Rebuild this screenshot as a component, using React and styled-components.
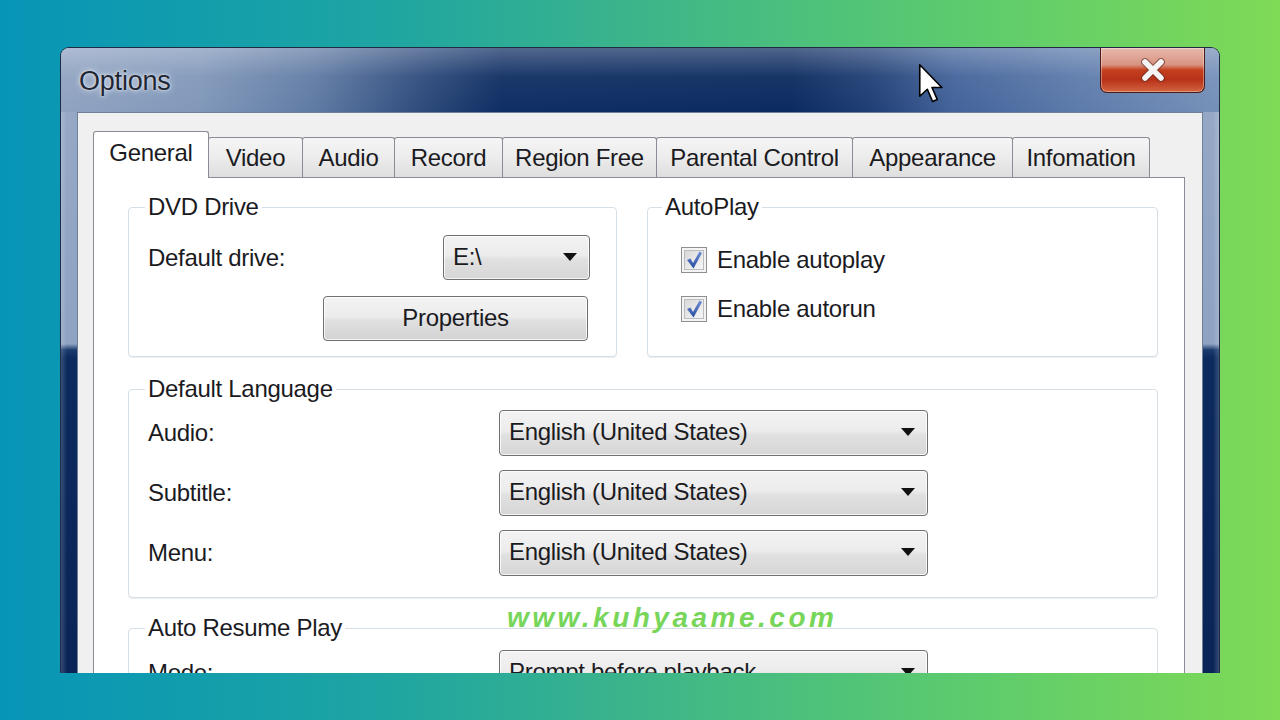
import React from 'react';
import styled, { createGlobalStyle } from 'styled-components';

const GlobalStyle = createGlobalStyle`
  html, body {
    margin: 0;
    padding: 0;
  }
  body {
    width: 1280px;
    height: 720px;
    overflow: hidden;
    background: linear-gradient(90deg, #0795b7 0%, #1ea5a2 30%, #3db58a 50%, #5ccb6e 75%, #7fda56 100%);
    font-family: "Liberation Sans", Arial, sans-serif;
  }
`;

const TABS = [
  { label: 'General', width: 116, active: true },
  { label: 'Video', width: 95 },
  { label: 'Audio', width: 93 },
  { label: 'Record', width: 109 },
  { label: 'Region Free', width: 155 },
  { label: 'Parental Control', width: 197 },
  { label: 'Appearance', width: 161 },
  { label: 'Infomation', width: 138 },
];

const LANGUAGES = [
  { label: 'Audio:', value: 'English (United States)' },
  { label: 'Subtitle:', value: 'English (United States)' },
  { label: 'Menu:', value: 'English (United States)' },
];

const Stage = styled.div`
  box-sizing: border-box;
  width: 1280px;
  height: 720px;
  padding: 47px 0 0 60px;
`;

const Window = styled.div`
  position: relative;
  box-sizing: border-box;
  width: 1160px;
  height: 626px;
  overflow: hidden;
  display: flex;
  flex-direction: column;
  border: 1px solid #1f2c44;
  border-bottom: none;
  border-radius: 9px 9px 0 0;
  background:
    linear-gradient(90deg, rgba(255, 255, 255, 0.18) 0, rgba(255, 255, 255, 0) 6px,
      rgba(255, 255, 255, 0) calc(100% - 6px), rgba(255, 255, 255, 0.18) 100%),
    linear-gradient(180deg, #97a9c6 0, #8ea2c2 296px, #1b3a6e 302px, #0c2a5e 310px, #0a2457 100%);
`;

const TitleBar = styled.div`
  height: 64px;
  flex: none;
  display: flex;
  align-items: flex-start;
  background:
    linear-gradient(180deg, rgba(255, 255, 255, 0.28) 0, rgba(255, 255, 255, 0.05) 45%, rgba(255, 255, 255, 0) 100%),
    linear-gradient(90deg, #90a3c1 0%, #8198ba 12%, #5f7aa3 22%, #2f4c7d 31%, #0f2e63 38%,
      #0b2a5f 63%, #203f75 70%, #43639a 77%, #5d7bab 88%, #7590b8 100%);
`;

const Title = styled.div`
  margin: 18px 0 0 18px;
  font-size: 27px;
  line-height: 30px;
  letter-spacing: -0.2px;
  color: #1e2633;
  text-shadow: 0 0 6px rgba(255, 255, 255, 0.85), 0 0 2px rgba(255, 255, 255, 0.9);
`;

const CloseButton = styled.div`
  box-sizing: border-box;
  width: 105px;
  height: 45px;
  margin: 0 14px 0 auto;
  display: flex;
  align-items: center;
  justify-content: center;
  border: 1px solid #4a1c18;
  border-top: none;
  border-radius: 0 0 7px 7px;
  background: linear-gradient(180deg, #e6b9ad 0%, #d99482 38%, #c4401f 50%, #b8321a 72%, #d3643f 100%);
  box-shadow: inset 0 0 0 1px rgba(255, 255, 255, 0.35);
`;

const Client = styled.div`
  flex: 1;
  margin: 0 16px;
  padding: 18px 17px 0 15px;
  display: flex;
  flex-direction: column;
  background: #f0f0f0;
  border: 1px solid #6f7f96;
  border-bottom: none;
`;

const TabRow = styled.div`
  display: flex;
  align-items: flex-end;
`;

const Tab = styled.div`
  box-sizing: border-box;
  flex: none;
  width: ${(p) => p.$width}px;
  height: ${(p) => (p.$active ? 47 : 40)}px;
  margin-bottom: ${(p) => (p.$active ? -1 : 0)}px;
  margin-left: ${(p) => (p.$first ? 0 : -1)}px;
  position: relative;
  z-index: ${(p) => (p.$active ? 2 : 1)};
  display: flex;
  align-items: center;
  justify-content: center;
  padding-bottom: ${(p) => (p.$active ? 4 : 0)}px;
  border: 1px solid #898c95;
  border-bottom: none;
  border-radius: 3px 3px 0 0;
  background: ${(p) =>
    p.$active ? '#ffffff' : 'linear-gradient(180deg, #f5f5f5 0%, #ececec 50%, #dedede 100%)'};
  font-size: 24px;
  letter-spacing: -0.3px;
  color: #1b1b1f;
  white-space: nowrap;
`;

const Panel = styled.div`
  flex: 1;
  padding: 14px 26px 0 34px;
  background: #ffffff;
  border: 1px solid #898c95;
  border-bottom: none;
`;

const GroupRow = styled.div`
  display: flex;
  gap: 30px;
`;

const Group = styled.fieldset`
  box-sizing: border-box;
  margin: ${(p) => p.$top || 0}px 0 0 0;
  min-width: 0;
  width: ${(p) => (p.$width ? `${p.$width}px` : 'auto')};
  flex: ${(p) => (p.$width ? 'none' : '1')};
  padding: ${(p) => p.$pad};
  border: 1px solid #d5dfe5;
  border-radius: 4px;
  box-shadow: 0 1px 0 rgba(220, 228, 234, 0.6);
`;

const Legend = styled.legend`
  padding: 0 3px;
  margin-left: -3px;
  font-size: 24px;
  line-height: 30px;
  letter-spacing: -0.3px;
  color: #1b1b1f;
`;

const Label = styled.span`
  font-size: 24px;
  letter-spacing: -0.3px;
  color: #1b1b1f;
  white-space: nowrap;
`;

const DriveRow = styled.div`
  display: flex;
  align-items: center;
  justify-content: space-between;
`;

const ButtonRow = styled.div`
  display: flex;
  justify-content: flex-end;
  margin-top: 16px;
  padding-right: 2px;
`;

const ComboBox = styled.div`
  box-sizing: border-box;
  width: ${(p) => p.$width}px;
  height: ${(p) => p.$height || 45}px;
  display: flex;
  align-items: center;
  padding: 0 12px 2px 9px;
  border: 1px solid #707070;
  border-radius: 4px;
  background: linear-gradient(180deg, #f3f3f3 0%, #ececec 45%, #e0e0e0 55%, #d6d6d6 100%);
  box-shadow: inset 0 0 0 1px rgba(255, 255, 255, 0.75);
  font-size: 24px;
  letter-spacing: -0.3px;
  color: #1b1b1f;
  white-space: nowrap;
`;

const Arrow = styled.span`
  margin-left: auto;
  width: 0;
  height: 0;
  border-left: 7px solid transparent;
  border-right: 7px solid transparent;
  border-top: 8px solid #111111;
`;

const Button = styled.div`
  box-sizing: border-box;
  width: 265px;
  height: 45px;
  display: flex;
  align-items: center;
  justify-content: center;
  padding-bottom: 2px;
  border: 1px solid #707070;
  border-radius: 4px;
  background: linear-gradient(180deg, #f3f3f3 0%, #ececec 45%, #e0e0e0 55%, #d3d3d3 100%);
  box-shadow: inset 0 0 0 1px rgba(255, 255, 255, 0.75);
  font-size: 24px;
  letter-spacing: -0.3px;
  color: #1b1b1f;
`;

const CheckList = styled.div`
  display: flex;
  flex-direction: column;
  gap: 23px;
  padding-left: 16px;
`;

const CheckRow = styled.div`
  display: flex;
  align-items: center;
  gap: 10px;
  height: 26px;
`;

const LangGrid = styled.div`
  display: grid;
  grid-template-columns: 351px 429px;
  row-gap: 14px;
  align-items: center;
`;

const Cursor = styled.svg`
  position: absolute;
  left: 857px;
  top: 15px;
  z-index: 5;
`;

const Watermark = styled.div`
  position: absolute;
  left: 446px;
  top: 554px;
  z-index: 5;
  font-size: 28px;
  font-weight: bold;
  font-style: italic;
  letter-spacing: 3.5px;
  line-height: 32px;
  color: #77d65a;
`;

const CloseGlyph = () => (
  <svg width="30" height="24" viewBox="0 0 30 24">
    <path d="M7 4 L23 20 M23 4 L7 20" stroke="#5b2a24" strokeWidth="8" strokeLinecap="round" opacity="0.55" />
    <path d="M7 4 L23 20 M23 4 L7 20" stroke="#f4f4f4" strokeWidth="5.5" strokeLinecap="round" />
  </svg>
);

const CheckBox = () => (
  <svg width="26" height="26" viewBox="0 0 26 26">
    <defs>
      <linearGradient id="cbFill" x1="0" y1="0" x2="1" y2="1">
        <stop offset="0" stopColor="#d8d8d8" />
        <stop offset="1" stopColor="#f7f7f7" />
      </linearGradient>
      <linearGradient id="cbMark" x1="0" y1="0" x2="0" y2="1">
        <stop offset="0" stopColor="#6e8ed8" />
        <stop offset="1" stopColor="#2a4d9f" />
      </linearGradient>
    </defs>
    <rect x="0.5" y="0.5" width="25" height="25" fill="#f4f4f4" stroke="#8e8f8f" />
    <rect x="3.5" y="3.5" width="19" height="19" fill="url(#cbFill)" stroke="#b9bcc0" />
    <path d="M6 13 L9.5 11.5 L12 16 L18.5 4.5 L21 6 L12.5 21.5 Z" fill="url(#cbMark)" />
  </svg>
);

const Combo = ({ value, width, height }) => (
  <ComboBox $width={width} $height={height}>
    {value}
    <Arrow />
  </ComboBox>
);

const App = () => (
  <Stage>
    <GlobalStyle />
    <Window>
      <TitleBar>
        <Title>Options</Title>
        <CloseButton>
          <CloseGlyph />
        </CloseButton>
      </TitleBar>
      <Client>
        <TabRow>
          {TABS.map((t, i) => (
            <Tab key={t.label} $width={t.width} $active={t.active} $first={i === 0}>
              {t.label}
            </Tab>
          ))}
        </TabRow>
        <Panel>
          <GroupRow>
            <Group $width={489} $pad="13px 26px 15px 19px">
              <Legend>DVD Drive</Legend>
              <DriveRow>
                <Label>Default drive:</Label>
                <Combo value="E:\" width={147} />
              </DriveRow>
              <ButtonRow>
                <Button>Properties</Button>
              </ButtonRow>
            </Group>
            <Group $pad="25px 20px 15px 17px">
              <Legend>AutoPlay</Legend>
              <CheckList>
                <CheckRow>
                  <CheckBox />
                  <Label>Enable autoplay</Label>
                </CheckRow>
                <CheckRow>
                  <CheckBox />
                  <Label>Enable autorun</Label>
                </CheckRow>
              </CheckList>
            </Group>
          </GroupRow>
          <Group $top={17} $pad="6px 20px 21px 19px">
            <Legend>Default Language</Legend>
            <LangGrid>
              {LANGUAGES.map((l) => (
                <React.Fragment key={l.label}>
                  <Label>{l.label}</Label>
                  <Combo value={l.value} width={429} height={46} />
                </React.Fragment>
              ))}
            </LangGrid>
          </Group>
          <Group $top={15} $pad="7px 20px 20px 19px">
            <Legend>Auto Resume Play</Legend>
            <LangGrid>
              <Label>Mode:</Label>
              <Combo value="Prompt before playback" width={429} height={46} />
            </LangGrid>
          </Group>
        </Panel>
      </Client>
      <Cursor width="28" height="42" viewBox="0 0 24 36">
        <path
          d="M1.5 1.5 L1.5 28.5 L8 22.5 L12.5 33 L16.5 31.2 L12 21 L20.5 21 Z"
          fill="#ffffff"
          stroke="#000000"
          strokeWidth="1.4"
          strokeLinejoin="round"
        />
      </Cursor>
      <Watermark>www.kuhyaame.com</Watermark>
    </Window>
  </Stage>
);

export default App;
